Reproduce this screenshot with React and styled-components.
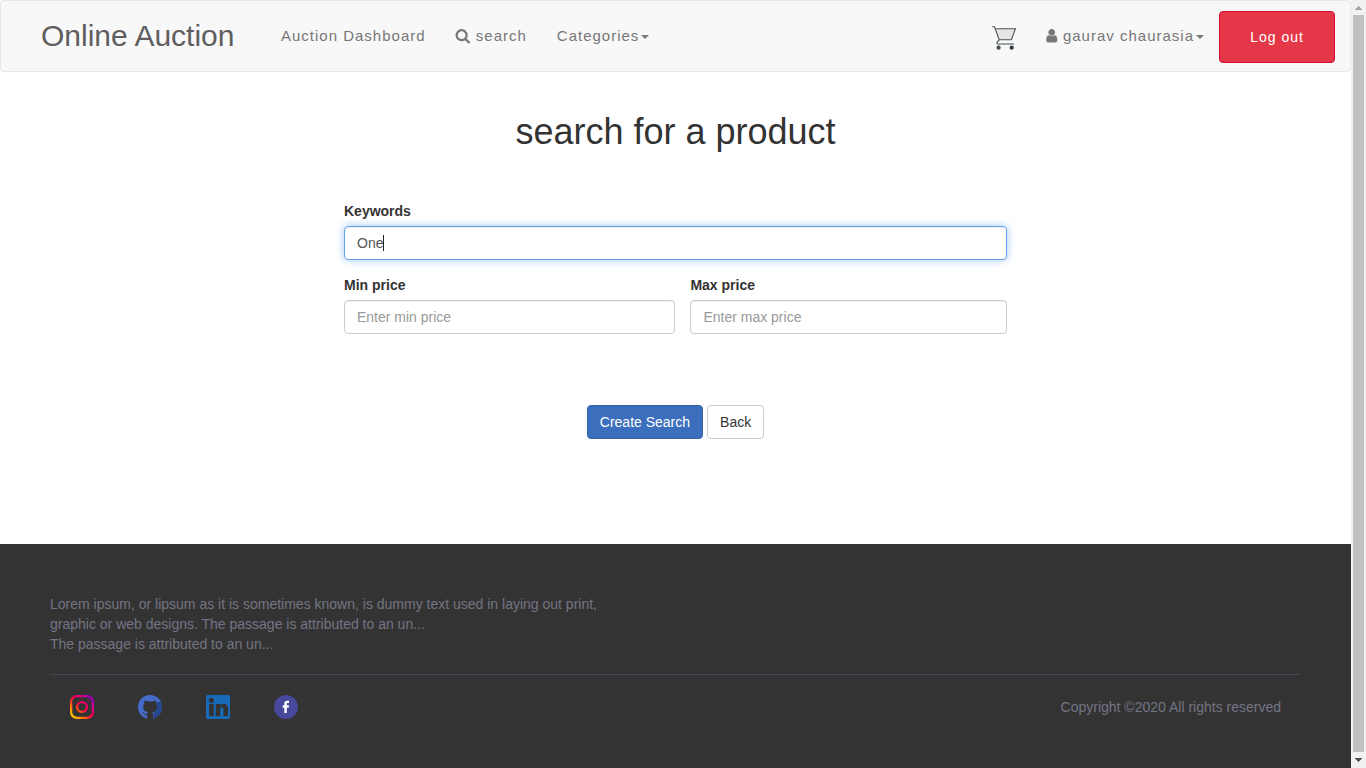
import React from 'react';
import styled, { createGlobalStyle } from 'styled-components';

const GlobalStyle = createGlobalStyle`
  *, *::before, *::after { box-sizing: border-box; }
  html, body { margin: 0; height: 100%; overflow: hidden; }
  body {
    font-family: "Helvetica Neue", "Liberation Sans", Arial, sans-serif;
    font-size: 14px;
    line-height: 20px;
    color: #333;
    background: #fff;
  }
`;

const Viewport = styled.div`
  display: flex;
  height: 768px;
`;

const Page = styled.div`
  flex: 1;
  display: flex;
  flex-direction: column;
`;

const Navbar = styled.nav`
  display: flex;
  height: 72px;
  padding: 10px 15px 0 40px;
  background: #f8f8f8;
  border: 1px solid #e7e7e7;
  border-radius: 4px;
`;

const Brand = styled.a`
  width: 240px;
  padding-top: 15px;
  font-size: 30px;
  line-height: 20px;
  color: #5e5e5e;
`;

const NavLink = styled.a`
  display: flex;
  align-items: center;
  height: 20px;
  margin: 15px ${(p) => p.$right ?? 30}px 0 0;
  font-size: 15px;
  letter-spacing: 1px;
  line-height: 20px;
  color: #777;
  white-space: nowrap;
`;

const Glyph = styled.svg`
  width: 15.5px;
  height: 15.5px;
  flex: none;
  margin: 0 ${(p) => p.$gap}px 0.5px -0.9px;
  fill: currentColor;
`;

const Caret = styled.span`
  margin: 2px 0 0 2px;
  border-top: 4px solid;
  border-left: 4px solid transparent;
  border-right: 4px solid transparent;
`;

const Account = styled.div`
  display: flex;
  margin-left: auto;
`;

const CartIcon = styled.svg`
  width: 24px;
  height: 24px;
  margin: 15px 28.8px 0 0;
`;

const Button = styled.button`
  height: 34px;
  padding: 0 12px;
  border: 1px solid ${(p) => p.$border};
  border-radius: 4px;
  background: ${(p) => p.$bg};
  color: ${(p) => p.$color};
  font: inherit;
`;

const LogoutButton = styled(Button)`
  width: 116px;
  height: 52px;
  letter-spacing: 1px;
  padding: 0;
`;

const Main = styled.main`
  display: flex;
  flex-direction: column;
  align-items: center;
  height: 472px;
`;

const Title = styled.h1`
  margin: 40px 0 49px;
  font-size: 36px;
  font-weight: 500;
  line-height: 40px;
`;

const Form = styled.form`
  width: 663px;
`;

const PriceRow = styled.div`
  display: grid;
  grid-template-columns: 331.4px 316.6px;
  column-gap: 15px;
`;

const Field = styled.div`
  margin-bottom: 15px;
`;

const Label = styled.label`
  display: block;
  height: 20px;
  margin: 0 0 5px;
  font-weight: 700;
`;

const Input = styled.div`
  display: flex;
  align-items: center;
  height: 34px;
  padding: 0 12px;
  border: 1px solid ${(p) => (p.$focused ? '#62a0ea' : '#ccc')};
  border-radius: 4px;
  box-shadow: inset 0 1px 1px rgba(0, 0, 0, 0.075)${(p) => (p.$focused ? ', 0 0 8px rgba(98, 160, 234, 0.6)' : '')};
  color: ${(p) => (p.$focused ? '#555' : '#999')};
`;

const TextCursor = styled.span`
  width: 1px;
  height: 16px;
  background: #222;
`;

const Actions = styled.div`
  display: flex;
  justify-content: center;
  gap: 4px;
  margin-top: 56px;
`;

const Footer = styled.footer`
  height: 224px;
  padding: 50px 50px 0;
  background: #333;
  color: #737584;
`;

const About = styled.p`
  margin: 0;
  padding-bottom: 20px;
  border-bottom: 1px solid #44445a;
`;

const FooterBar = styled.div`
  display: flex;
  justify-content: space-between;
  align-items: center;
  padding: 20px 20px 0;
`;

const Socials = styled.div`
  display: flex;
  gap: 44px;
`;

const SocialIcon = styled.svg`
  display: block;
  width: 24px;
  height: 24px;
`;

const ScrollTrack = styled.div`
  display: flex;
  flex-direction: column;
  align-items: center;
  width: 15px;
  background: #f1f1f1;
`;

const ScrollArrow = styled.svg`
  width: 15px;
  height: 15px;
  flex: none;
  shape-rendering: crispEdges;
`;

const ScrollThumb = styled.div`
  width: 11px;
  height: 737px;
  background: #c1c1c1;
`;

const SearchGlyph = () => (
  <Glyph $gap={5.6} viewBox="0 0 1792 1792">
    <path d="M1216 832q0-185-131.5-316.5t-316.5-131.5-316.5 131.5-131.5 316.5 131.5 316.5 316.5 131.5 316.5-131.5 131.5-316.5zm512 832q0 52-38 90t-90 38q-54 0-90-38l-343-342q-179 124-399 124-143 0-273.5-55.5t-225-150-150-225-55.5-273.5 55.5-273.5 150-225 225-150 273.5-55.5 273.5 55.5 225 150 150 225 55.5 273.5q0 220-124 399l343 343q37 37 37 90z" />
  </Glyph>
);

const UserGlyph = () => (
  <Glyph $gap={3.2} viewBox="0 0 1792 1792">
    <path d="M1536 1399q0 109-62.5 187t-150.5 78h-854q-88 0-150.5-78t-62.5-187q0-85 8.5-160.5t31.5-152 58.5-131 94-89 134.5-34.5q131 128 313 128t313-128q76 0 134.5 34.5t94 89 58.5 131 31.5 152 8.5 160.5zm-256-887q0 159-112.5 271.5t-271.5 112.5-271.5-112.5-112.5-271.5 112.5-271.5 271.5-112.5 271.5 112.5 112.5 271.5z" />
  </Glyph>
);

const Cart = () => (
  <CartIcon viewBox="0 0 24 24" fill="none">
    <path d="M4 2.7h19.3l-4 11.1H7.3z" fill="#e6e4e5" />
    <path d="M0.2 0.7h2.3l4.7 13.1-2 2.5q-.7 1.6.6 1.6" stroke="#4b5155" strokeWidth="1.1" />
    <path d="M3.6 2.7h19.8l-4 11.1H7.2" stroke="#4b5155" strokeWidth="1.1" />
    <path d="M5 18h17" stroke="#8b9499" strokeWidth="1.7" />
    <circle cx="6.6" cy="21.7" r="2.1" fill="#454d52" />
    <circle cx="19.7" cy="21.7" r="2.1" fill="#353d42" />
  </CartIcon>
);

const Instagram = () => (
  <SocialIcon viewBox="0 0 24 24" fill="none">
    <defs>
      <linearGradient id="insta" x1="2" y1="22" x2="22" y2="2" gradientUnits="userSpaceOnUse">
        <stop stopColor="#fc0" />
        <stop offset=".23" stopColor="#ff7a00" />
        <stop offset=".5" stopColor="#ff0045" />
        <stop offset=".78" stopColor="#d0008b" />
        <stop offset="1" stopColor="#9500c8" />
      </linearGradient>
    </defs>
    <rect x="1.15" y="1.15" width="21.7" height="21.7" rx="5.7" stroke="url(#insta)" strokeWidth="2.3" />
    <circle cx="12" cy="12" r="4.9" stroke="url(#insta)" strokeWidth="2.4" />
    <circle cx="18.4" cy="5.6" r="0.9" fill="#b900a8" />
  </SocialIcon>
);

const Github = () => (
  <SocialIcon viewBox="0 0 24 24">
    <defs>
      <clipPath id="hub-disc">
        <circle cx="12" cy="12" r="12" />
      </clipPath>
    </defs>
    <g clipPath="url(#hub-disc)">
      <path d="M0 0h24v24H0z" fill="#466bca" />
      <path d="M17.5 7H24v17h-9z" fill="#27478f" />
      <path
        d="M9 24v-4.2c-2.2.4-3.3-.4-4-1.7l-1-1.2c1.5-.2 2 1.7 3.2 2 .8.2 1.4 0 1.9-.2.1-.8.3-1.2.7-1.6-2.9-.4-4.6-2-4.6-5.3 0-1.4.4-2.4 1.2-3.2-.3-1.1-.2-2.2.2-3.2 1.3 0 2.3.6 3.2 1.2 1.5-.3 3.1-.3 4.6 0 .9-.6 1.9-1.2 3.2-1.2.4 1 .5 2.1.2 3.2.8.8 1.2 1.8 1.2 3.2 0 3.3-1.7 4.9-4.7 5.3.6.6.9 1.3.9 2.3V24z"
        fill="#333"
      />
    </g>
  </SocialIcon>
);

const LinkedIn = () => (
  <SocialIcon viewBox="0 0 24 24">
    <rect width="24" height="24" rx="1.8" fill="#186bb8" />
    <g fill="#333">
      <circle cx="5.4" cy="5.3" r="2.6" />
      <path d="M3.1 9h4.7v12.2H3.1zM9.7 9h4.3v1.5c.8-1.2 2-1.8 3.5-1.8 3.1 0 4.6 2 4.6 5.4v7.1h-4.7v-6.4c0-1.4-.4-2.2-1.5-2.2s-1.6.8-1.6 2.2v6.4H9.7z" />
    </g>
  </SocialIcon>
);

const Facebook = () => (
  <SocialIcon viewBox="0 0 24 24">
    <circle cx="12" cy="12" r="12" fill="#47479b" />
    <path d="M10.3 18v-5.3H8.7v-2.4h1.6V8.7c0-2 1-2.9 2.9-2.9h1.8v2.3h-1.2c-.8 0-1 .4-1 1v1.2H15l-.3 2.4h-1.9V18z" fill="#fff" />
  </SocialIcon>
);

export default function App() {
  return (
    <Viewport>
      <GlobalStyle />
      <Page>
        <Navbar>
          <Brand>Online Auction</Brand>
          <NavLink>Auction Dashboard</NavLink>
          <NavLink>
            <SearchGlyph />
            search
          </NavLink>
          <NavLink>
            Categories
            <Caret />
          </NavLink>
          <Account>
            <Cart />
            <NavLink $right={15}>
              <UserGlyph />
              gaurav chaurasia
              <Caret />
            </NavLink>
            <LogoutButton $bg="#e43849" $border="#dc0a30" $color="#fff">
              Log out
            </LogoutButton>
          </Account>
        </Navbar>
        <Main>
          <Title>search for a product</Title>
          <Form>
            <Field>
              <Label>Keywords</Label>
              <Input $focused>
                One
                <TextCursor />
              </Input>
            </Field>
            <PriceRow>
              <Field>
                <Label>Min price</Label>
                <Input>Enter min price</Input>
              </Field>
              <Field>
                <Label>Max price</Label>
                <Input>Enter max price</Input>
              </Field>
            </PriceRow>
            <Actions>
              <Button type="button" $bg="#3b6ebc" $border="#3563a9" $color="#fff">
                Create Search
              </Button>
              <Button type="button" $bg="#fff" $border="#ccc" $color="#333">
                Back
              </Button>
            </Actions>
          </Form>
        </Main>
        <Footer>
          <About>
            Lorem ipsum, or lipsum as it is sometimes known, is dummy text used in laying out print,
            <br />
            graphic or web designs. The passage is attributed to an un...
            <br />
            The passage is attributed to an un...
          </About>
          <FooterBar>
            <Socials>
              <Instagram />
              <Github />
              <LinkedIn />
              <Facebook />
            </Socials>
            <span>Copyright ©2020 All rights reserved</span>
          </FooterBar>
        </Footer>
      </Page>
      <ScrollTrack>
        <ScrollArrow viewBox="0 0 15 15">
          <path d="M7 6h1v1h1v1h1v1h1v1H4V9h1V8h1V7h1z" fill="#a3a3a3" />
        </ScrollArrow>
        <ScrollThumb />
        <ScrollArrow viewBox="0 0 15 15">
          <path d="M4 6h7v1h-1v1H9v1H8v1H7V9H6V8H5V7H4z" fill="#505050" />
        </ScrollArrow>
      </ScrollTrack>
    </Viewport>
  );
}
